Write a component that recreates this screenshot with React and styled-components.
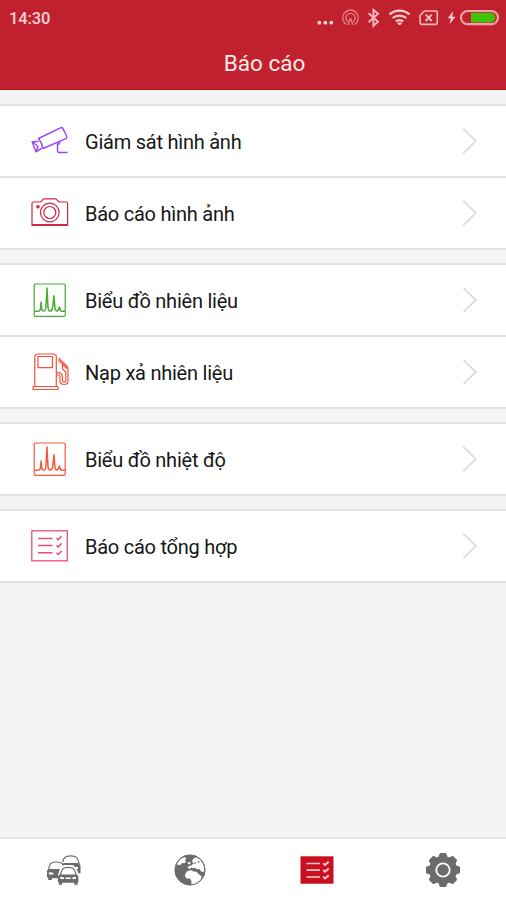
import React, { useState } from 'react';
import styled, { createGlobalStyle } from 'styled-components';

const GlobalStyle = createGlobalStyle`
    body {
        margin: 0;
        background-color: #f4f4f4;
        font-family: Roboto, "Noto Sans", sans-serif;
    }
    svg {
        display: block;
    }
`
const Screen = styled.div`
    display: flex;
    flex-direction: column;
    height: 900px;
    overflow: hidden;
    background-color: #f4f4f4;
`
const Header = styled.header`
    box-sizing: border-box;
    height: 90px;
    flex-shrink: 0;
    background-color: #c1212f;
    border-bottom: 1px solid #b90c10;
`
const StatusBar = styled.div`
    display: flex;
    align-items: center;
    justify-content: space-between;
    height: 36px;
    padding: 0 6px 0 9px;
`
const Clock = styled.span`
    padding-top: 1px;
    font-size: 16.5px;
    font-weight: 500;
    line-height: 20px;
    letter-spacing: -0.15px;
    color: #fbd3d3;
`
const Title = styled.h1`
    margin: 0;
    padding-left: 23px;
    text-align: center;
    font-size: 22.5px;
    font-weight: 400;
    line-height: 55px;
    color: #ffe9e8;
`
const Content = styled.main`
    flex: 1;
    display: flex;
    flex-direction: column;
    gap: 13px;
    padding-top: 14px;
`
const Group = styled.div`
    background-color: #ffffff;
    border-top: 2px solid #e2e2e2;
    border-bottom: 2px solid #e2e2e2;
`
const Row = styled.button`
    box-sizing: border-box;
    display: flex;
    align-items: center;
    width: 100%;
    height: ${(props) => props.$height}px;
    padding: 0 28px 0 30px;
    border: none;
    border-top: ${(props) => (props.$divided ? '2px solid #e2e2e2' : 'none')};
    background-color: transparent;
    font-family: inherit;
    text-align: left;
`
const RowIcon = styled.span`
    width: 40px;
    margin-right: 15px;
    color: ${(props) => props.$color};
`
const RowLabel = styled.span`
    flex: 1;
    padding-top: 2px;
    font-size: 20px;
    line-height: 26px;
    letter-spacing: -0.24px;
    color: #171717;
`
const TabBar = styled.nav`
    box-sizing: border-box;
    display: grid;
    grid-template-columns: repeat(4, 1fr);
    height: 63px;
    padding-left: 1px;
    border-top: 2px solid #e6e6e6;
    background-color: #ffffff;
`
const Tab = styled.button`
    display: flex;
    align-items: center;
    justify-content: center;
    padding: 0;
    border: none;
    background-color: transparent;
    color: ${(props) => (props.$active ? '#c9101f' : '#6b6b6b')};
`

const StatusIcons = () => (
    <svg width="184" height="26" viewBox="316 5 184 26" fill="none" stroke="#f9b9bb">
        <g fill="#fbd3d3" stroke="none">
            <circle cx="319.3" cy="22.700" r="1.9" />
            <circle cx="325.3" cy="22.700" r="1.9" />
            <circle cx="331.3" cy="22.700" r="1.9" />
        </g>
        <g stroke="#e58289" strokeWidth="1.3">
            <path d="M346.5 24.500a7.8 7.8 0 1 1 8 0" />
            <path d="M348 21.800a4.600 4.600 0 1 1 5 0" />
            <path d="M350.500 18l-2 5.500v1.500M350.500 18l2 5.500v1.500" />
        </g>
        <path d="M368.6 13.2l9.400 8.600-4.600 4v-16l4.600 3.900-9.400 8.500" strokeWidth="1.9" />
        <g stroke="#fbcfd0" strokeWidth="2.200">
            <path d="M389.5 14.400c6-5 14-5 20 0" />
            <path d="M392.700 18c4-3.300 9.600-3.300 13.600 0" />
            <path d="M395.800 21.400c2.300-1.700 5.100-1.700 7.400 0" />
            <path d="M397.600 23l2 2 2-2z" fill="#fbcfd0" strokeWidth="1" />
        </g>
        <path d="M424.500 11h11.200q1.600 0 1.600 1.600v10.200q0 1.600-1.600 1.600h-14q-1.600 0-1.600-1.600v-7.400z" strokeWidth="1.600" />
        <path d="M425.700 14.600l6 6.400M431.700 14.600l-6 6.400" strokeWidth="2" />
        <path d="M453 11.300l-5.200 7h3l-1.300 6 6-7.600h-3.200z" fill="#fbcfd0" stroke="none" />
        <rect x="461" y="11" width="37" height="13.200" rx="6.600" stroke="#f2a3a6" strokeWidth="2.200" />
        <path d="M471 12.800h19.500a4.800 4.800 0 0 1 0 9.600h-19.500z" fill="#42c30b" stroke="none" />
    </svg>
)

const CctvIcon = () => (
    <svg width="40" height="40" viewBox="0 0 40 40" fill="none" stroke="currentColor" strokeWidth="1.4" strokeLinejoin="round">
        <path d="M8.5 17.500L30.500 6.800q1.700-.7 2.500.8l3.700 7.600q.7 1.700-.9 2.500L13 27.500q-1.200-5.800-4.500-10z" />
        <path d="M8.300 20.500L2.200 20.800l1 3 2.800 7 5.800-3.600M2.500 21l5.500 4.500-2 5" />
        <path d="M27.500 22v7.500q0 2 2 2H37.500M30 20.800q-.3 2.200-2.500 3.200" />
    </svg>
)

const CameraIcon = () => (
    <svg width="40" height="40" viewBox="0 0 40 40" fill="none" stroke="currentColor" strokeWidth="1.200">
        <path d="M2 10.200q0-1.200 1.200-1.200h7.300l3.300-3.200h12l3.300 3.200h7.300q1.200 0 1.200 1.200V32.500H2zM2 31.500h35.600" />
        <circle cx="19.800" cy="19.500" r="9.300" />
        <circle cx="19.800" cy="19.500" r="6" />
        <circle cx="8" cy="13.800" r="1.200" fill="currentColor" />
    </svg>
)

const ChartIcon = () => (
    <svg width="40" height="40" viewBox="0 0 40 40" fill="none" stroke="currentColor" strokeWidth="1.200">
        <rect x="4.200" y="4" width="31" height="32.300" rx="1" />
        <path d="M4.500 31.200h3.300q2 0 2.600-1.700l.7-7.500.7 7.500q.5 1.500 2 1.500 1.600 0 2.100-3.500L17 8l1 19.500q.3 3.500 2 3.500 2 0 2.600-3L24 15.800l.9 12.200q.3 3 2.200 3 1.300 0 2.300-4 .8 4.200 2.300 4.200H35" strokeWidth="1.500" strokeLinejoin="round" />
    </svg>
)

const FuelIcon = () => (
    <svg width="40" height="40" viewBox="0 0 40 40" fill="none" stroke="currentColor" strokeWidth="1.200" strokeLinejoin="round">
        <path d="M4.800 34.500V5q0-3 3-3h15.500q3 0 3 3v29.500M3 34.500h25v3H3z" />
        <path d="M8 4.500h14.500v11.200H8z" />
        <path d="M28.500 6l8.200 8q1.300 1.300 1.300 3v11.500q0 4-4 4t-4-4v-3.500q0-2.500-3-2.500M28.500 8.500l4 3.700v4.600l3.300 3.200v8.500q0 1.700-1.700 1.700t-1.700-1.700v-4q0-4-5.400-4.200M32.500 12l4.500 4.500" />
    </svg>
)

const ChecklistIcon = () => (
    <svg width="40" height="40" viewBox="0 0 40 40" fill="none" stroke="currentColor" strokeWidth="1.300">
        <rect x="1.800" y="4.800" width="35.500" height="30" />
        <path d="M8 12.500h14.500M8 19.600h14.500M8 26.700h14.500" strokeWidth="1.500" />
        <path d="M26.500 12l1.700 1.800 3.500-3.800M26.500 19.300l1.700 1.800 3.500-3.800M26.500 26.700l1.700 1.800 3.500-3.800" strokeWidth="1.500" />
    </svg>
)

const Chevron = () => (
    <svg width="16" height="28" viewBox="0 0 16 28" fill="none" stroke="#d8d8d8" strokeWidth="1.600">
        <path d="M1.300 1.800L13.800 14 1.300 26.200" />
    </svg>
)

const CarsIcon = () => (
    <svg width="36" height="32" viewBox="0 0 36 32" fill="none" stroke="currentColor" strokeLinejoin="round">
        <path d="M16.500 8q1.200-4.300 3.500-5.300 4.500-1.500 9.500 0 2.200.8 3.700 7.300" strokeWidth="1.200" fill="#ffffff" />
        <path d="M16.500 9.800l1.500-.8h14.500l2 2.200v8h-3.800l-1-4.200h2.300v-2h-3.500l-1.500-2H16.500z" fill="currentColor" stroke="none" />
        <path d="M2.500 15q1.300-5.500 3.500-6.300 4.200-1.400 8.700 0 1.800.6 2.800 2.800" strokeWidth="1.200" fill="#ffffff" />
        <path d="M1 16.500l1.500-1.500H14l-2 9.300H5.800v1.800H2.200v-2L1 23z" fill="currentColor" stroke="none" />
        <path d="M2.800 18.300l4.500.4v1.800l-4.200-.1z" fill="#ffffff" stroke="none" />
        <path d="M14 21q1.700-6.500 4-7 4.300-1 8.700 0 2.300.5 4 7v8H14z" fill="#ffffff" stroke="#ffffff" strokeWidth="4" />
        <path d="M14.300 21q1.700-6.200 3.700-7 4.300-1.300 8.500 0 2 .8 3.700 7" fill="#ffffff" strokeWidth="1.200" />
        <path d="M12 22l1.700-1.500h17l1.700 1.500v6.300h-.8v2.500h-3.300v-2h-12.200v2h-3.300v-2.500H12z" fill="currentColor" stroke="none" />
        <path d="M14.300 22.700l3.700.7v1.600h-3.700zM30 22.700l-3.700.7v1.600H30zM19.500 23.400h5.300v1.600h-5.300z" fill="#ffffff" stroke="none" />
    </svg>
)

const GlobeIcon = () => (
    <svg width="34" height="34" viewBox="0 0 34 34">
        <circle cx="17" cy="17" r="15.300" fill="currentColor" />
        <g fill="#ffffff">
            <path d="M3.500 11.500q1.700-4 4.700-6l3.500-1.500 1.800 1.500-2 1.500 1.500 1-1 2-3.200.2-1.600 2-1.700-.5z" />
            <path d="M14.500 10.700l1.200-2 1.800.5-.6 2.200zM19 8l2.200-3.300 3.200-.2q5 3 6.600 8.500l.3 5.500-2.300.5-3-3-2.500.2-1.500-1.700-2 1.200-1-1.400-2.500 1.700-1.700-1 .5-1.800 2.700-.5 2.500-2.200z" />
            <path d="M12 21.500l1.800-3 3-1.300 2.500.3 1 1 3.200.2 2.200 2.300 3 2.500q-.2 3.500-4.500 6.500l-3.200 1.700-2.500.2-.2-4.200-1.200-2.300-3.300.2-1.500-1.600z" />
        </g>
        <path d="M20.500 10l2.500-1-.5 2.200zM24.500 7.500l2 1-.8 2.200zM18.500 15l2 .2 2 1.500h-3z" fill="currentColor" />
        <circle cx="17" cy="17" r="15" fill="none" stroke="currentColor" strokeWidth="1" />
    </svg>
)

const ReportIcon = () => (
    <svg width="36" height="30" viewBox="0 0 36 30" fill="none">
        <rect x="1.500" y="1.300" width="33" height="27.400" fill="currentColor" />
        <path d="M7.500 8.500H21M7.500 15.200H21M7.500 22H21" stroke="#ffc9cb" strokeWidth="1.700" />
        <path d="M24.200 8.200l1.900 1.700 3.600-3.200M24.200 15l1.900 1.700 3.600-3.200M24.200 21.700l1.900 1.700 3.600-3.200" stroke="#ffc9cb" strokeWidth="2" />
    </svg>
)

const TEETH = [0, 45, 90, 135, 180, 225, 270, 315]

const GearIcon = () => (
    <svg width="36" height="36" viewBox="0 0 36 36" fill="currentColor">
        <circle cx="18" cy="18" r="14" />
        {TEETH.map((angle) => (
            <path key={angle} d="M13.200 6l1.400-4.300q.2-.7.900-.7h5q.7 0 .9.700l1.400 4.300z" transform={`rotate(${angle} 18 18)`} />
        ))}
        <circle cx="18" cy="18" r="6.700" fill="none" stroke="#ffffff" strokeWidth="1.800" />
    </svg>
)

const groups = [
    [
        { label: 'Giám sát hình ảnh', Icon: CctvIcon, color: '#9a45f5', height: 70 },
        { label: 'Báo cáo hình ảnh', Icon: CameraIcon, color: '#cf2742', height: 72 },
    ],
    [
        { label: 'Biểu đồ nhiên liệu', Icon: ChartIcon, color: '#48ad35', height: 70 },
        { label: 'Nạp xả nhiên liệu', Icon: FuelIcon, color: '#f4513f', height: 72 },
    ],
    [{ label: 'Biểu đồ nhiệt độ', Icon: ChartIcon, color: '#f4593c', height: 70 }],
    [{ label: 'Báo cáo tổng hợp', Icon: ChecklistIcon, color: '#ed4c83', height: 70 }],
]

const tabs = [
    { name: 'vehicles', Icon: CarsIcon },
    { name: 'map', Icon: GlobeIcon },
    { name: 'reports', Icon: ReportIcon },
    { name: 'settings', Icon: GearIcon },
]

const App = () => {

    const [tab, setTab] = useState('reports')

    return (
        <Screen>
            <GlobalStyle />
            <Header>
                <StatusBar>
                    <Clock>14:30</Clock>
                    <StatusIcons />
                </StatusBar>
                <Title>Báo cáo</Title>
            </Header>
            <Content>
                {groups.map((rows, i) => (
                    <Group key={i}>
                        {rows.map(({ label, Icon, color, height }, j) => (
                            <Row key={label} $height={height} $divided={j > 0}>
                                <RowIcon $color={color}><Icon /></RowIcon>
                                <RowLabel>{label}</RowLabel>
                                <Chevron />
                            </Row>
                        ))}
                    </Group>
                ))}
            </Content>
            <TabBar>
                {tabs.map(({ name, Icon }) => (
                    <Tab key={name} $active={tab === name} onClick={() => setTab(name)}>
                        <Icon />
                    </Tab>
                ))}
            </TabBar>
        </Screen>
    );
}

export default App;
